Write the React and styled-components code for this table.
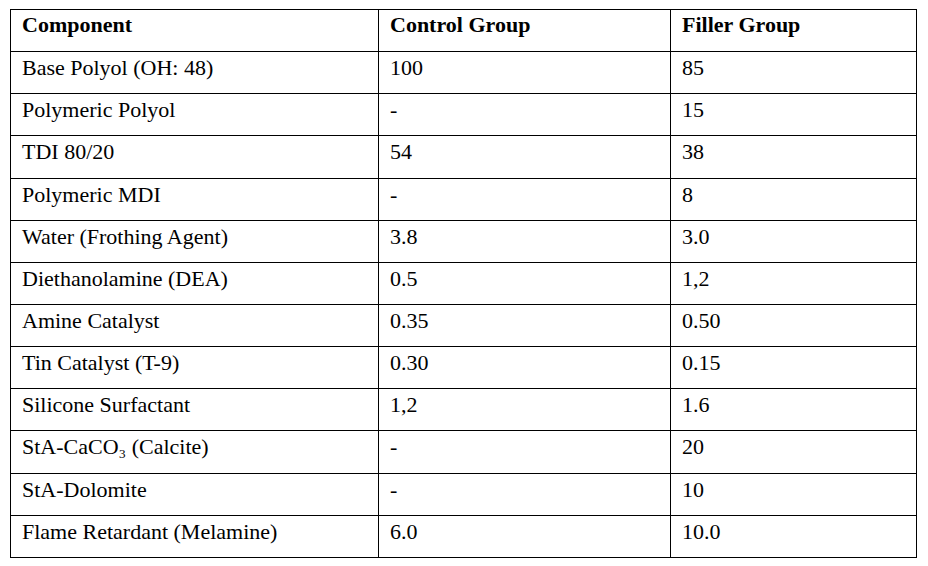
import React from 'react';
import styled, { createGlobalStyle } from 'styled-components';

const GlobalStyle = createGlobalStyle`
	html, body {
		margin: 0;
		padding: 0;
		background: #fff;
	}
`;

const Page = styled.div`
	width: 928px;
	height: 566px;
	padding: 9px 0 0 10px;
	box-sizing: border-box;
	background: #fff;
`;

const Table = styled.table`
	border-collapse: collapse;
	table-layout: fixed;
	width: 906px;
	font-family: 'Liberation Serif', 'Times New Roman', serif;
	font-size: 22px;
	color: #000;
`;

const Col = styled.col`
	width: ${(p) => p.$w}px;
`;

const Row = styled.tr`
	height: 42.15px;
`;

const Cell = styled.td`
	border: 1px solid #000;
	padding: 3px 10px 0 11px;
	vertical-align: top;
	text-align: left;
	font-weight: 400;
	line-height: normal;
	white-space: nowrap;
	box-sizing: border-box;
`;

const HeadCell = styled(Cell).attrs({ as: 'th' })`
	padding-top: 2px;
	font-weight: 700;
`;

const columns = [
	{ label: 'Component', width: 368 },
	{ label: 'Control Group', width: 292 },
	{ label: 'Filler Group', width: 246 },
];

const rows = [
	['Base Polyol (OH: 48)', '100', '85'],
	['Polymeric Polyol', '-', '15'],
	['TDI 80/20', '54', '38'],
	['Polymeric MDI', '-', '8'],
	['Water (Frothing Agent)', '3.8', '3.0'],
	['Diethanolamine (DEA)', '0.5', '1,2'],
	['Amine Catalyst', '0.35', '0.50'],
	['Tin Catalyst (T-9)', '0.30', '0.15'],
	['Silicone Surfactant', '1,2', '1.6'],
	['StA-CaCO\u2083 (Calcite)', '-', '20'],
	['StA-Dolomite', '-', '10'],
	['Flame Retardant (Melamine)', '6.0', '10.0'],
];

export default function App() {
	return (
		<Page>
			<GlobalStyle />
			<Table>
				<colgroup>
					{columns.map((c) => (
						<Col key={c.label} $w={c.width} />
					))}
				</colgroup>
				<thead>
					<Row>
						{columns.map((c) => (
							<HeadCell key={c.label}>{c.label}</HeadCell>
						))}
					</Row>
				</thead>
				<tbody>
					{rows.map((r) => (
						<Row key={r[0]}>
							{r.map((v, i) => (
								<Cell key={i}>{v}</Cell>
							))}
						</Row>
					))}
				</tbody>
			</Table>
		</Page>
	);
}
